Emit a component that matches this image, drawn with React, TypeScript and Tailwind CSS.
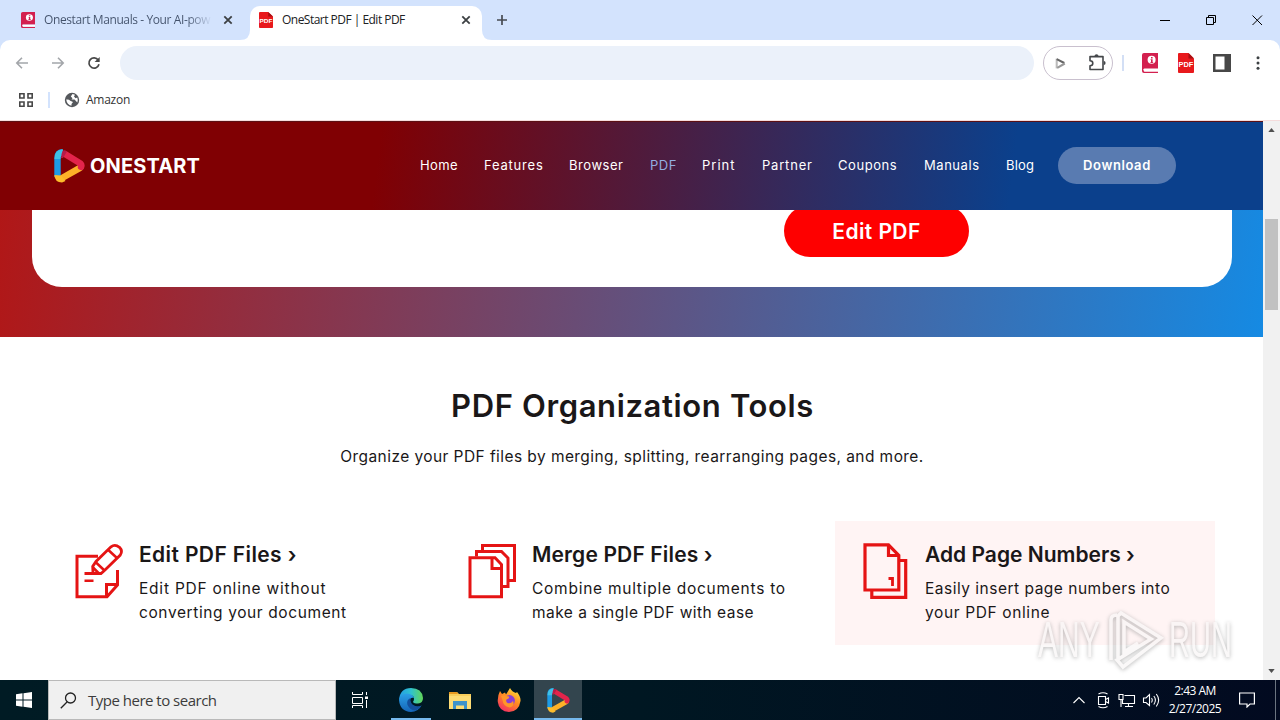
import type { ReactNode } from "react";

const ui = "font-['Open_Sans','Noto_Sans',sans-serif]";

function ManualIcon({ className }: { className: string }) {
  return (
    <svg viewBox="0 0 16 20" preserveAspectRatio="none" className={className}>
      <path d="M2 0H16V15.5H2.5Q1.5 15.5 1.5 16.5T2.5 18.5H16V20H2Q0 20 0 18V2Q0 0 2 0Z" fill="#d3204f" />
      <path d="M1.5 16H16V18.5H2Z" fill="#fff" />
      <circle cx="9.6" cy="6.8" r="4" fill="#fff" />
      <path d="M9 4h1.6v1.4H9zM8.6 6.2h2v3h.6v.8H8.4v-.8H9V7h-.4z" fill="#d3204f" />
    </svg>
  );
}

function PdfIcon({ className }: { className: string }) {
  return (
    <svg viewBox="0 0 16 20" preserveAspectRatio="none" className={className}>
      <path d="M1 0H10.500L16 5.500V19Q16 20 15 20H1Q0 20 0 19V1Q0 0 1 0Z" fill="#e8191c" />
      <path d="M10.500 0V5.500H16Z" fill="#a80f12" />
      <text x="8" y="13.500" textAnchor="middle" fontSize="7.400" fontWeight="700" fill="#fff" fontFamily="Liberation Sans, sans-serif">PDF</text>
    </svg>
  );
}

function StartMark({ className }: { className: string }) {
  return (
    <svg viewBox="0 0 31 34" className={className}>
      <path d="M3.500 28V9Q3.500 3.500 8.500 3.300" fill="none" stroke="#1d9be6" strokeWidth="6.400" />
      <path d="M3.500 10Q3.500 3.500 9 3.300" fill="none" stroke="#3fc1e6" strokeWidth="6" />
      <path d="M9 28.500L26 18.800" fill="none" stroke="#fdb128" strokeWidth="6.600" strokeLinecap="round" />
      <path d="M.300 26Q1 33.600 8 33.600L11.500 32L7 26.500Z" fill="#fdbd2c" />
      <path d="M11 5L26.500 14.500Q28 16 27 18" fill="none" stroke="#e3244b" strokeWidth="6.400" strokeLinecap="round" />
      <path d="M6.800 9L8.500 2Q10 .500 13 2.500L9 9Z" fill="#b51c49" />
    </svg>
  );
}

function XIcon({ className }: { className: string }) {
  return (
    <svg viewBox="0 0 10 10" className={className}>
      <path d="M1.300 1.300L8.700 8.700M8.700 1.300L1.300 8.700" stroke="#3c4043" strokeWidth="1.800" fill="none" />
    </svg>
  );
}

function TabStrip() {
  return (
    <div className={`flex h-10 bg-[#d3e3fd] ${ui} text-[12px]`}>
      <div className="flex w-[250px] items-center pl-[21px]">
        <ManualIcon className="h-4 w-[14px]" />
        <div className="ml-[9px] w-[168px] bg-linear-to-r from-[#43526b] from-85% to-[#d3e3fd] bg-clip-text text-[12px] tracking-[-0.4px] whitespace-nowrap text-transparent">
          Onestart Manuals - Your AI-pow
        </div>
        <XIcon className="ml-[11px] h-[10px] w-[10px]" />
      </div>
      <div className="relative mt-[6px] flex h-[34px] w-[232px] items-center rounded-t-[10px] bg-white pb-[6px] pl-[9px]">
        <svg viewBox="0 0 10 10" className="absolute bottom-0 -left-[10px] h-[10px] w-[10px]"><path d="M10 0V10H0Q10 10 10 0Z" fill="#fff" /></svg>
        <svg viewBox="0 0 10 10" className="absolute -right-[10px] bottom-0 h-[10px] w-[10px]"><path d="M0 0V10H10Q0 10 0 0Z" fill="#fff" /></svg>
        <PdfIcon className="h-4 w-[14px]" />
        <div className="ml-[9px] w-[179px] text-[12px] tracking-[-0.52px] whitespace-nowrap text-[#202124]">OneStart PDF | Edit PDF</div>
        <XIcon className="h-[10px] w-[10px]" />
      </div>
      <svg viewBox="0 0 12 12" className="mt-[14px] ml-[14px] h-3 w-3"><path d="M6 1V11M1 6H11" stroke="#474b52" strokeWidth="1.700" /></svg>
      <div className="flex-1" />
      <svg viewBox="0 0 110 16" className="mt-3 mr-[14px] h-4 w-[110px]" fill="none" stroke="#000" strokeWidth="1">
        <path d="M4 8.500H14" />
        <path d="M50.500 5.500H57.500V12.500H50.500ZM52.500 5V3.500H59.500V10.500H58" />
        <path d="M96.500 3.500L106 13M106 3.500L96.500 13" />
      </svg>
    </div>
  );
}

function Toolbar() {
  return (
    <div className="bg-[#d3e3fd]">
      <div className="flex h-[46px] items-center rounded-t-[10px] bg-white pl-[15px]">
        <svg viewBox="0 0 90 14" className="h-[14px] w-[90px]" fill="none">
          <path d="M13 7H2M7 1.800L1.800 7L7 12.200M37 7H48M43 1.800L48.200 7L43 12.200" stroke="#a3a6aa" strokeWidth="1.600" />
          <path d="M83.200 4A5.100 5.100 0 1 0 84 8.300" stroke="#474747" strokeWidth="1.700" />
          <path d="M84.700 1V6H79.600Z" fill="#474747" />
        </svg>
        <div className="ml-[15px] h-[34px] w-[914px] rounded-full bg-[#ebf1fa]" />
        <div className="ml-[9px] flex h-[34px] w-[70px] items-center rounded-full border border-[#c9c0ce] pl-[10px]">
          <svg viewBox="0 0 12 12" className="h-[13px] w-[13px]" fill="none"><path d="M2.500 1.500V10.500" stroke="#bbb" strokeWidth="1.900" /><path d="M2.500 2L9.500 5.500" stroke="#666" strokeWidth="1.900" /><path d="M3 10L10 6" stroke="#999" strokeWidth="1.900" /></svg>
          <svg viewBox="0 0 18 18" className="mb-[2px] ml-[21px] h-[18px] w-[18px]" fill="none">
            <path d="M2 3.600H15V16.500H2V12.700Q4.800 12.700 4.800 10.200T2 7.700Z" stroke="#44474a" strokeWidth="1.600" strokeLinejoin="round" />
            <path d="M6.500 3Q6.500 1.200 8.500 1.200T10.500 3ZM15.800 8Q17.600 8 17.600 10T15.800 12Z" fill="#44474a" />
          </svg>
        </div>
        <div className="ml-[9px] h-4 w-[2px] bg-[#d3dff5]" />
        <ManualIcon className="ml-[18px] h-5 w-4" />
        <PdfIcon className="ml-5 h-5 w-4" />
        <svg viewBox="0 0 18 18" className="ml-[19px] h-[18px] w-[18px]"><path d="M0 0H18V18H0ZM2.500 2.500V15.500H11.500V2.500Z" fill="#474747" fillRule="evenodd" /></svg>
        <svg viewBox="0 0 4 14" className="ml-[25px] h-[14px] w-1" fill="#3c4043"><circle cx="2" cy="1.700" r="1.500" /><circle cx="2" cy="7" r="1.500" /><circle cx="2" cy="12.300" r="1.500" /></svg>
      </div>
      <div className={`flex h-[34px] items-center bg-white pb-[7px] pl-[19px] text-[12px] ${ui}`}>
        <svg viewBox="0 0 14 14" className="h-[14px] w-[14px]" fill="none" stroke="#474747" strokeWidth="1.600"><path d="M.8.800H5V5H.8ZM9 .800H13.200V5H9ZM.8 9H5V13.200H.8ZM9 9H13.200V13.200H9Z" /></svg>
        <div className="ml-[15px] h-4 w-[2px] bg-[#d3e3fd]" />
        <svg viewBox="0 0 16 16" className="ml-[14px] h-4 w-4">
          <circle cx="8" cy="8" r="7.200" fill="#55585c" />
          <path d="M2.200 7.500Q5 7 6.200 8.800L9 10L7.500 12V13.800Q3 13 2.200 7.500ZM8.500 2L6.800 4.500L8.500 6.200L7.500 7.500H10.500L13.300 10.500Q14.300 8 13.300 5.500L11.500 6.200L10 4.500L11 2.800Z" fill="#fff" />
        </svg>
        <span className="ml-[6px] tracking-[-0.25px] text-[#333]">Amazon</span>
      </div>
      <div className="h-px bg-[#f5dcdc]" />
    </div>
  );
}

function SiteHeader() {
  return (
    <header className="flex h-[89px] w-[1263px] items-center border-t border-[#5c1014] bg-[linear-gradient(97deg,#800003_30%,#0b408c_80%)] pl-[54px] font-['Inter',sans-serif] text-[13px] tracking-[0.55px] text-white">
      <StartMark className="h-[34px] w-[31px]" />
      <span className="ml-[5px] w-[330px] text-[20px] font-bold tracking-[0.15px]">ONESTART</span>
      <nav className="flex whitespace-nowrap">
        <a className="w-[64px] tracking-[0.4px]">Home</a>
        <a className="w-[85px] tracking-[0.8px]">Features</a>
        <a className="w-[81px]">Browser</a>
        <a className="w-[52px] text-[#93aee0]">PDF</a>
        <a className="w-[60px] tracking-[1px]">Print</a>
        <a className="w-[76px] tracking-[0.8px]">Partner</a>
        <a className="w-[86px]">Coupons</a>
        <a className="w-[82px]">Manuals</a>
        <a className="w-[52px] tracking-[0.2px]">Blog</a>
      </nav>
      <button className="mb-[2px] h-[37px] w-[118px] rounded-full bg-[#597bb1] pt-px text-[13px] font-semibold tracking-[0.6px]">Download</button>
    </header>
  );
}

function Hero() {
  return (
    <section className="h-[127px] w-[1263px] bg-[linear-gradient(97deg,#b11717,#158ae3)] pl-8 font-['Inter',sans-serif]">
      <div className="h-[77px] w-[1200px] overflow-hidden rounded-b-[30px] bg-white pl-[752px]">
        <button className="-mt-[5px] h-[52px] w-[185px] rounded-full bg-[#fe0000] pt-px text-[21px] font-semibold tracking-[0.4px] text-white">Edit PDF</button>
      </div>
    </section>
  );
}

function Tool({ icon, title, children, active }: { icon: ReactNode; title: ReactNode; children: ReactNode; active?: boolean }) {
  return (
    <article className={`flex h-[124px] pt-[21px] pl-[25px] ${active ? "w-[380px] bg-[#fff4f4]" : "w-[381px]"}`}>
      {icon}
      <div className="ml-[5px] whitespace-nowrap text-[#1a1718]">
        <h3 className="text-[21px] leading-[26px] font-semibold">{title}</h3>
        <p className="mt-[9px] text-[15.5px] leading-6">{children}</p>
      </div>
    </article>
  );
}

function EditIcon() {
  return (
    <svg viewBox="14 0 60 60" className="h-[60px] w-[60px] shrink-0" fill="none" stroke="#e51414" strokeWidth="3">
      <path d="M38 14.300H17V54.800H47L57.500 43V28" />
      <path d="M46.500 54.500V42.500H58" />
      <path d="M24.500 31.500H41L45 28L60.300 13Q63 9 59.500 5.300Q55 1.800 51 4.800L36 19.500L32.700 24.500L33 31" strokeWidth="2.800" />
      <path d="M48.300 8L57 16M36 20.500L44.500 28.500M24.500 38.700H33.500M33 25.500L38.500 31" strokeWidth="2.500" />
    </svg>
  );
}

function MergeIcon() {
  return (
    <svg viewBox="0 0 60 60" className="h-[60px] w-[60px] shrink-0" fill="none" stroke="#e51414" strokeWidth="3">
      <path d="M3 15.800H28L34.500 22.500V54.800H3Z" />
      <path d="M25 16V26.500H34.500" />
      <path d="M9.500 14.500V9.500H34.500L41 16V44.500H36" />
      <path d="M15.500 8.500V3.500H47.500V38.500H42" />
    </svg>
  );
}

function NumberIcon() {
  return (
    <svg viewBox="0 0 60 60" className="h-[60px] w-[60px] shrink-0" fill="none" stroke="#e51414" strokeWidth="3.200">
      <path d="M5 2.800H28.500L38.800 13.500V48H5Z" />
      <path d="M28.500 3V13.500H38.500M39 18.500H45.700V55.300H11.800V48.500" />
      <path d="M28.500 36.500H32.500V44" strokeWidth="2.800" />
    </svg>
  );
}

function Tools() {
  return (
    <section className="h-[343px] w-[1263px] bg-white pt-[49px] font-['Inter',sans-serif]">
      <h2 className="pl-[2px] text-center text-[31px] leading-10 font-semibold tracking-[0.63px] text-[#1a1718]">PDF Organization Tools</h2>
      <p className="mt-[19px] pl-px text-center text-[15.5px] leading-6 tracking-[0.43px] text-[#1a1718]">Organize your PDF files by merging, splitting, rearranging pages, and more.</p>
      <div className="mt-[52px] flex gap-3 pl-[49px]">
        <Tool icon={<EditIcon />} title={<span className="tracking-[0.38px]">Edit PDF Files ›</span>}>
          <span className="tracking-[0.78px]">Edit PDF online without</span><br />
          <span className="tracking-[0.61px]">converting your document</span>
        </Tool>
        <Tool icon={<MergeIcon />} title={<span className="tracking-[0.15px]">Merge PDF Files ›</span>}>
          <span className="tracking-[0.74px]">Combine multiple documents to</span><br />
          <span className="tracking-[0.47px]">make a single PDF with ease</span>
        </Tool>
        <Tool icon={<NumberIcon />} active title="Add Page Numbers ›">
          <span className="tracking-[0.5px]">Easily insert page numbers into</span><br />
          <span className="tracking-[0.62px]">your PDF online</span>
        </Tool>
      </div>
    </section>
  );
}

function Watermark() {
  return (
    <div className="pointer-events-none absolute top-[606px] left-[1038px] flex h-[68px] w-[196px] items-center text-[#f8f6f6] opacity-70 drop-shadow-[0_1px_2px_#999]">
      <span className="inline-block w-[67px] origin-left scale-x-[0.6] font-['Liberation_Sans',sans-serif] text-[50px] leading-[50px]">ANY</span>
      <svg viewBox="0 0 60 68" className="h-[68px] w-[60px] shrink-0" fill="none" stroke="currentColor" strokeWidth="3.600">
        <path d="M6 54V14Q6 9 12 9M13 52V10L16 7L56 32L18 61L12 54L46 33L19 16V46L33 37" />
      </svg>
      <span className="ml-1 inline-block w-[66px] origin-left scale-x-[0.58] font-['Liberation_Sans',sans-serif] text-[50px] leading-[50px]">RUN</span>
    </div>
  );
}

function Scrollbar() {
  return (
    <div className="flex w-[17px] flex-col items-center bg-[#f1f1f1]">
      <svg viewBox="0 0 8 5" className="mt-[7px] h-[4px] w-[7px]"><path d="M0 5L4 0L8 5Z" fill="#505050" /></svg>
      <div className="mt-[87px] h-[91px] w-[13px] bg-[#c1c1c1]" />
      <div className="flex-1" />
      <svg viewBox="0 0 8 5" className="mb-[7px] h-[4px] w-[7px]"><path d="M0 0L4 5L8 0Z" fill="#505050" /></svg>
    </div>
  );
}

function Taskbar() {
  return (
    <footer className={`flex h-10 bg-linear-to-r from-[#001b24] via-[#001722] to-[#020a20] ${ui}`}>
      <div className="flex w-12 items-center justify-center">
        <svg viewBox="0 0 16 16" className="h-4 w-4" fill="#fff"><path d="M0 2.300L6.500 1.300V7.500H0ZM7.500 1.200L16 0V7.500H7.500ZM0 8.500H6.500V14.700L0 13.700ZM7.500 8.500H16V16L7.500 14.800Z" /></svg>
      </div>
      <div className="flex w-72 items-center border border-[#b9b9b9] bg-[#f0f0f0] pl-[11px]">
        <svg viewBox="0 0 17 17" className="h-[17px] w-[17px]" fill="none" stroke="#222" strokeWidth="1.300"><circle cx="10.500" cy="6" r="5" /><path d="M7 10L.8 16.200" /></svg>
        <span className="ml-[11px] text-[15px] tracking-[-0.5px] text-[#3c3c3c]">Type here to search</span>
      </div>
      <div className="flex w-[55px] items-center pl-4">
        <svg viewBox="0 0 16 16" className="h-4 w-4" fill="none" stroke="#fff"><path d="M.5 0V2.500H10.500V0M.5 5.500H10.500V11.500H.5ZM.5 16V13.500H10.500V16M14.500 0V3M14.500 8V16" /><path d="M13 4.500H16V7H13Z" fill="#fff" stroke="none" /></svg>
      </div>
      <div className="flex w-10 items-center justify-center border-b-2 border-[#76b9ed] pt-[2px]">
        <svg viewBox="0 0 24 24" className="h-6 w-6">
          <defs>
            <linearGradient id="edgeTop"><stop offset="0" stopColor="#249ce4" /><stop offset=".5" stopColor="#2fc2cf" /><stop offset="1" stopColor="#62d657" /></linearGradient>
            <linearGradient id="edgeLow" x2="0" y2="1"><stop stopColor="#2ba0e6" /><stop offset="1" stopColor="#1565b8" /></linearGradient>
          </defs>
          <path d="M0 12Q1 0 12 0Q23 0 24 10Q24 15 19 15.500Q15 15.500 14 14Q16 11 14 8L8 6L0 12Z" fill="url(#edgeTop)" />
          <path d="M0 12Q1 5.500 8 5.500Q14 6 15 10Q11 9 11 13Q12 18.500 18 18.800Q21 18.700 22.500 17.500Q19 24 12 24Q1 23.500 0 12Z" fill="url(#edgeLow)" />
          <path d="M11.500 10Q7 12 8.500 17Q11 22 16 22.500Q20 21.500 22.500 17.500Q18 19.800 13.500 16.500Q11 14 11.500 10Z" fill="#134f9c" />
        </svg>
      </div>
      <div className="flex w-[58px] items-center justify-center">
        <svg viewBox="0 0 22 19" className="h-[19px] w-[22px]"><path d="M0 1H8L10 3H22V18H0Z" fill="#f8ce5b" /><path d="M0 1H8L9 3H0Z" fill="#e79a20" /><path d="M0 5H22V18H0Z" fill="#fddc75" /><path d="M4 10H18V18H15V14.500H7V18H4Z" fill="#3e93cb" /></svg>
      </div>
      <div className="flex w-10 items-center justify-center">
        <svg viewBox="0 0 24 24" className="h-6 w-6">
          <defs><linearGradient id="fox" x1=".8" y1="0" x2=".2" y2="1"><stop stopColor="#ffe13b" /><stop offset=".45" stopColor="#ff8b22" /><stop offset="1" stopColor="#f32868" /></linearGradient></defs>
          <path d="M3 3L5 6L8 4.500L9 6.500L13 0Q15 4 19 5L20 4Q24 9 23.500 13Q22 23.500 12 24Q2 23.500.8 14Q.3 8 3 3Z" fill="url(#fox)" />
          <circle cx="12.500" cy="12.500" r="5.400" fill="#8b3fd3" />
          <path d="M4 8Q7 6.500 9 8L12 8.500Q13 10 9.500 11.500Q8.500 13.500 10.500 15Q14 16 16 13Q18 18 12.500 19.500Q6 18 5.500 12Z" fill="#ff9629" />
        </svg>
      </div>
      <div className="ml-[5px] flex w-12 items-center justify-center border-b-2 border-[#76b9ed] bg-[#33454e] pt-[2px]"><StartMark className="h-[25px] w-[23px]" /></div>
      <div className="flex-1" />
      <div className="flex items-center text-white">
        <svg viewBox="0 0 88 18" className="h-[18px] w-[88px]" fill="none" stroke="#fff" strokeWidth="1.100">
          <path d="M.5 12L6 6.500L11.500 12" />
          <path d="M25.500 5.500H32.500V13.500H25.500ZM32.500 8.500L35.500 7V12L32.500 10.500M25.500 3Q30 .500 34.500 3M25.500 15.500Q30 18 34.500 15.500" />
          <path d="M51.500 4.500H61.500V12.500H49.500V8.500M46 3.500H50V8.500H46ZM48 8.500V16M55.500 12.500V15.500M52 15.500H60" />
          <path d="M70.500 7V11.500H73L76.500 14.500V3.500L73 7ZM78.500 7Q80 9 78.500 11.500M80.800 5Q84 9 80.800 13.500M83.300 3Q88 9 83.300 15.500" />
        </svg>
        <div className="ml-[4px] w-[60px] text-center text-[12px] leading-[18px] tracking-[-0.5px] whitespace-nowrap">2:43 AM<br />2/27/2025</div>
        <svg viewBox="0 0 16 16" className="ml-[14px] h-4 w-4" fill="none" stroke="#fff" strokeWidth="1.200"><path d="M.6 1H15.400V12H11L8 15V12H.6Z" /></svg>
        <div className="mr-1 ml-5 h-10 w-px bg-[#6b7480]" />
      </div>
    </footer>
  );
}

export default function App() {
  return (
    <div className="relative flex h-[720px] w-[1280px] flex-col overflow-hidden bg-white">
      <TabStrip />
      <Toolbar />
      <main className="flex h-[559px]">
        <div className="w-[1263px]">
          <SiteHeader />
          <Hero />
          <Tools />
        </div>
        <Scrollbar />
      </main>
      <Taskbar />
      <Watermark />
    </div>
  );
}
